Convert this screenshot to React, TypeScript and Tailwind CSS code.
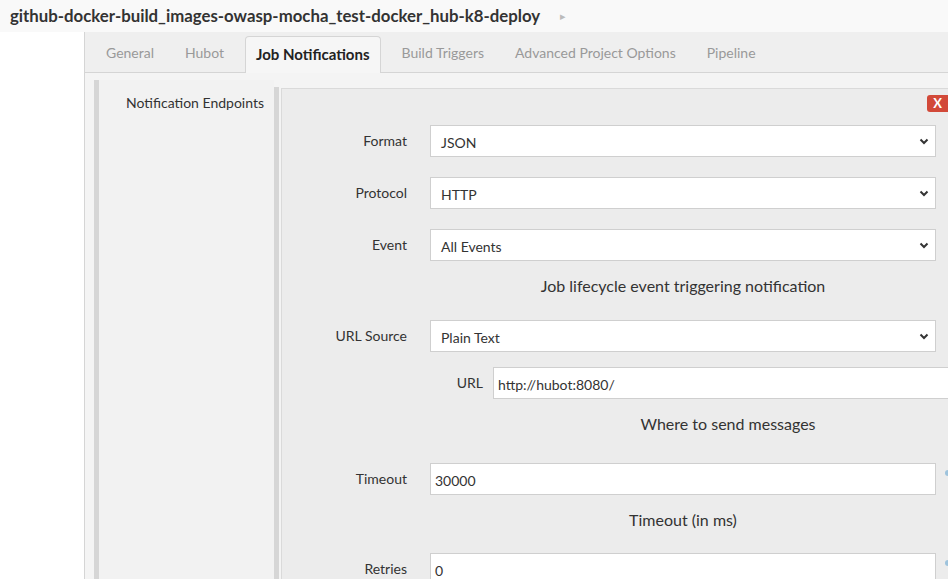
import React from "react";

const font = { fontFamily: "Lato, 'Noto Sans', sans-serif" };

function Chevron() {
  return (
    <svg width="10" height="7" viewBox="0 0 10 7" className="shrink-0">
      <path d="M1.5 1.5 L5 5 L8.5 1.5" fill="none" stroke="#333" strokeWidth="2" />
    </svg>
  );
}

function SelectBox({ value }: { value: string }) {
  return (
    <div className="flex h-[32px] w-[506px] items-center justify-between border border-[#cfcfcf] bg-white pl-[10px] pr-[6px] text-[14px] text-[#333]">
      <span className="pt-[2px]">{value}</span>
      <Chevron />
    </div>
  );
}

function TextBox({ value, width }: { value: string; width: string }) {
  return (
    <div
      className={`flex h-[32px] ${width} shrink-0 items-center border border-[#cfcfcf] bg-white pl-[4px] text-[14px] text-[#333]`}
    >
      <span className="pt-[2px]">{value}</span>
    </div>
  );
}

function Row({ label, children, help }: { label: string; children: React.ReactNode; help?: boolean }) {
  return (
    <div className="flex items-center">
      <div className="w-[125px] shrink-0 pb-[2px] text-right text-[14px] text-[#333]">{label}</div>
      <div className="ml-[23px] flex items-center">
        {children}
        {help && <span className="ml-[9px] mt-[-12px] h-[6px] w-[4px] rounded-l-full bg-[#9ec3dc]" />}
      </div>
    </div>
  );
}

function Desc({ text, className }: { text: string; className: string }) {
  return (
    <div className={`flex ${className}`}>
      <div className="w-[125px] shrink-0" />
      <div className="ml-[23px] w-[506px] text-center text-[16px] leading-[24px] text-[#333]">{text}</div>
    </div>
  );
}

export default function App() {
  const tabs = ["General", "Hubot", "Job Notifications", "Build Triggers", "Advanced Project Options", "Pipeline"];

  return (
    <div className="flex h-[579px] w-full flex-col overflow-hidden bg-white" style={font}>
      <div className="flex h-[32px] shrink-0 items-center bg-[#f9f9f9] pl-[10px]">
        <span className="text-[16.8px] font-bold text-[#333]">
          github-docker-build_images-owasp-mocha_test-docker_hub-k8-deploy
        </span>
        <span className="ml-[20px] text-[11px] text-[#bbb]">▸</span>
      </div>

      <div className="flex min-h-0 flex-1">
        <div className="w-[84px] shrink-0 bg-white" />
        <div className="flex min-w-0 flex-1 flex-col border-l border-[#d5d5d5]">
          <div className="flex h-[41px] shrink-0 items-end gap-[11px] border-b border-[#d5d5d5] bg-[#efefef] pl-[11px]">
            {tabs.map((t) =>
              t === "Job Notifications" ? (
                <div
                  key={t}
                  className="mb-[-1px] flex h-[37px] items-center rounded-t-[4px] border border-b-0 border-[#d5d5d5] bg-[#f6f6f6] px-[10px] pb-[2px] text-[15px] font-bold text-[#222]"
                >
                  {t}
                </div>
              ) : (
                <div key={t} className="flex h-[37px] items-center px-[10px] pb-[2px] text-[14px] text-[#999]">
                  {t}
                </div>
              )
            )}
          </div>

          <div className="flex min-h-0 flex-1 bg-[#f4f4f4] pl-[9px] pt-[7px]">
            <div className="w-[5px] shrink-0 bg-[#d6d6d6]" />
            <div className="w-[175px] shrink-0 bg-[#f2f2f2] pr-[10px] pt-[12px] text-right text-[14px] text-[#333]">
              Notification Endpoints
            </div>
            <div className="mt-[7px] w-[5px] shrink-0 bg-[#d6d6d6]" />
            <div className="relative ml-[2px] mt-[8px] min-w-0 flex-1 overflow-hidden border-l border-t border-[#dadada] bg-[#ececec]">
              <div className="absolute right-0 top-[6px] flex h-[17px] w-[21px] items-center justify-center rounded-l-[3px] bg-[#d24939] text-[13px] font-bold text-white">
                X
              </div>

              <div className="flex flex-col pt-[36px]">
                <Row label="Format">
                  <SelectBox value="JSON" />
                </Row>
                <div className="mt-[20px]">
                  <Row label="Protocol">
                    <SelectBox value="HTTP" />
                  </Row>
                </div>
                <div className="mt-[20px]">
                  <Row label="Event">
                    <SelectBox value="All Events" />
                  </Row>
                </div>
                <Desc text="Job lifecycle event triggering notification" className="mt-[13px]" />
                <div className="mt-[22px]">
                  <Row label="URL Source">
                    <SelectBox value="Plain Text" />
                  </Row>
                </div>

                <div className="mt-[15px] flex">
                  <div className="w-[148px] shrink-0" />
                  <div className="flex flex-col">
                    <div className="flex items-center">
                      <div className="w-[53px] shrink-0 pb-[2px] text-right text-[14px] text-[#333]">URL</div>
                      <div className="ml-[10px]">
                        <TextBox value="http://hubot:8080/" width="w-[480px]" />
                      </div>
                    </div>
                    <div className="ml-[63px] mt-[13px] w-[470px] text-center text-[16px] leading-[24px] text-[#333]">
                      Where to send messages
                    </div>
                  </div>
                </div>

                <div className="mt-[27px]">
                  <Row label="Timeout" help>
                    <TextBox value="30000" width="w-[506px]" />
                  </Row>
                </div>
                <Desc text="Timeout (in ms)" className="mt-[13px]" />
                <div className="mt-[21px]">
                  <Row label="Retries" help>
                    <TextBox value="0" width="w-[506px]" />
                  </Row>
                </div>
              </div>
            </div>
          </div>
        </div>
      </div>
    </div>
  );
}
